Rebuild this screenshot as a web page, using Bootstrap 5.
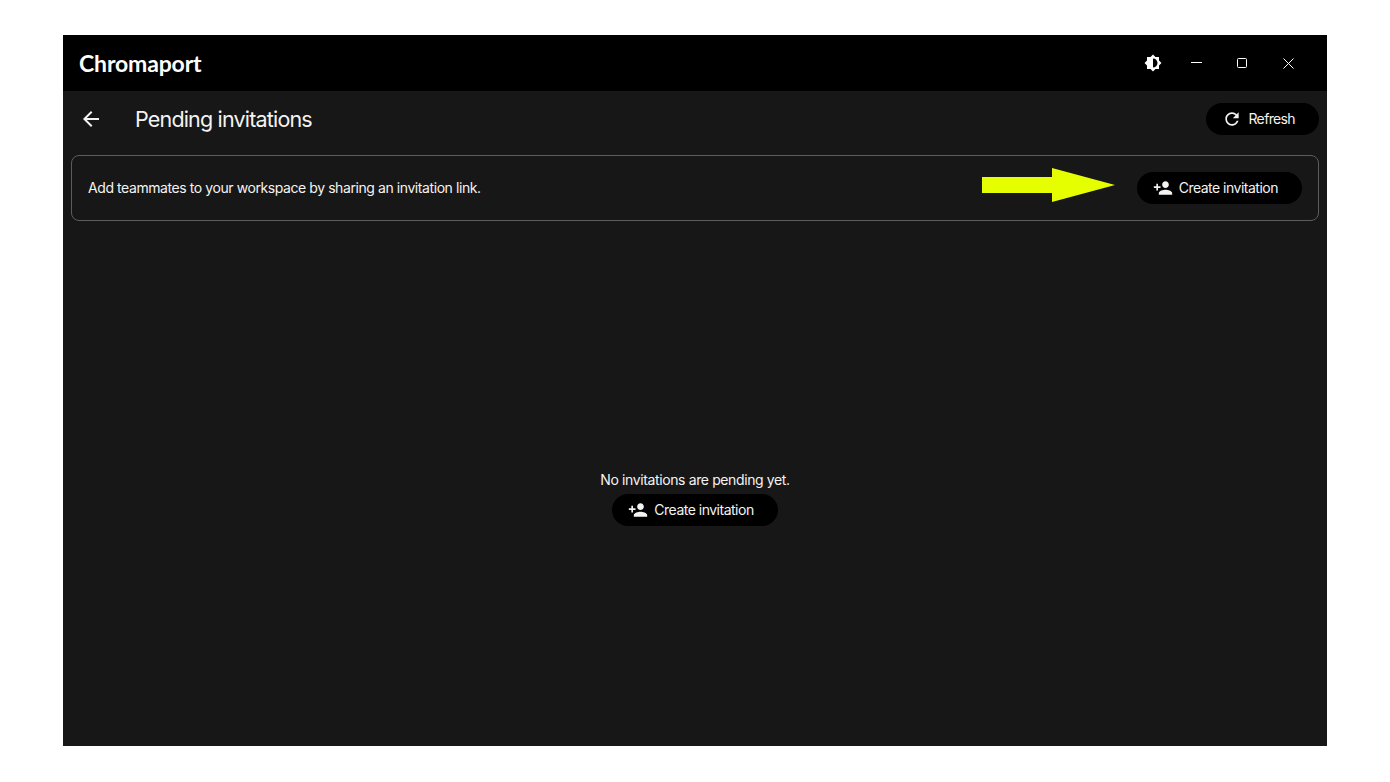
<!doctype html>
<html lang="en">
<head>
<meta charset="utf-8">
<title>Chromaport</title>
<link href="https://cdn.jsdelivr.net/npm/bootstrap@5.3.0/dist/css/bootstrap.min.css" rel="stylesheet">
<style>
html,body{height:100%;}
body{background:#fff;font-family:Inter,"Liberation Sans",sans-serif;padding:35px 63px 36px;overflow:hidden;}
.app-win{width:1264px;height:711px;background:#171717;color:#f5f3f1;}
.title-bar{height:56px;background:#000;padding-left:16px;padding-right:16px;}
.brand-name{font-family:Lato,"Noto Sans",sans-serif;font-size:23px;font-weight:700;color:#fff;letter-spacing:-.15px;line-height:1;}
.win-ctrl{width:46px;height:56px;color:#fff;}
.theme-ctrl{margin-right:-3px;margin-left:-1px;}
.page-head{height:56px;margin-bottom:8px;padding-left:8px;padding-right:8px;}
.back-btn{width:40px;height:40px;color:#f5f3f1;margin-right:24px;}
.page-title{font-size:21.5px;font-weight:400;letter-spacing:-.82px;margin:2px 0 0;line-height:1;}
.pill-btn{height:32px;background:#000;color:#f5f3f1;border:0;border-radius:16px;font-size:14px;letter-spacing:-.5px;padding:0 24px 0 16px;gap:6px;white-space:nowrap;}
.pill-btn:hover,.pill-btn:focus{background:#000;color:#f5f3f1;}
.pill-label{margin-bottom:2px;}
.refresh-pill{letter-spacing:-.64px;}
.invite-panel{height:66px;margin:0 8px;border:1px solid #5c5c5c;border-radius:8px;padding:0 16px;font-size:14px;letter-spacing:-.42px;}
.pointer-arrow{margin-right:22px;margin-top:-6px;}
.empty-zone{height:570px;}
.empty-text{font-size:14px;letter-spacing:-.38px;line-height:20px;margin:0 0 4px;}
.empty-inner{margin-top:29px;}
</style>
</head>
<body>
<div class="app-win d-flex flex-column">
  <header class="title-bar d-flex align-items-center flex-shrink-0">
    <span class="brand-name">Chromaport</span>
    <div class="ms-auto d-flex align-items-center">
      <span class="win-ctrl theme-ctrl d-flex align-items-center justify-content-center">
        <svg width="18" height="18" viewBox="0 0 24 24" fill="currentColor"><path d="M20 8.690V4h-4.690L12 .69 8.690 4H4v4.690L.69 12 4 15.310V20h4.690L12 23.310 15.310 20H20v-4.690L23.310 12 20 8.690zM12 18V6c3.310 0 6 2.690 6 6s-2.690 6-6 6z"/></svg>
      </span>
      <span class="win-ctrl d-flex align-items-center justify-content-center">
        <svg width="11" height="11" viewBox="0 0 11 11" fill="none" stroke="currentColor"><path d="M0 4.500h11"/></svg>
      </span>
      <span class="win-ctrl d-flex align-items-center justify-content-center">
        <svg width="10" height="10" viewBox="0 0 10 10" fill="none" stroke="currentColor"><rect x=".5" y=".5" width="9" height="9" rx="1"/></svg>
      </span>
      <span class="win-ctrl d-flex align-items-center justify-content-center">
        <svg width="11" height="11" viewBox="0 0 11 11" fill="none" stroke="currentColor"><path d="M.5.5l10 10M10.500.5l-10 10"/></svg>
      </span>
    </div>
  </header>

  <div class="page-head d-flex align-items-center flex-shrink-0">
    <span class="back-btn d-flex align-items-center justify-content-center">
      <svg width="24" height="24" viewBox="0 0 24 24" fill="currentColor"><path d="M20 11H7.830l5.590-5.590L12 4l-8 8 8 8 1.410-1.410L7.830 13H20v-2z"/></svg>
    </span>
    <h1 class="page-title">Pending invitations</h1>
    <button type="button" class="btn pill-btn refresh-pill ms-auto d-flex align-items-center">
      <svg width="20" height="20" viewBox="0 0 24 24" fill="currentColor"><path d="M17.650 6.350C16.200 4.900 14.210 4 12 4c-4.420 0-7.990 3.580-7.990 8s3.570 8 7.990 8c3.730 0 6.840-2.550 7.730-6h-2.080c-.82 2.330-3.040 4-5.650 4-3.310 0-6-2.690-6-6s2.690-6 6-6c1.660 0 3.140.69 4.220 1.780L13 11h7V4l-2.350 2.350z"/></svg>
      <span class="pill-label">Refresh</span>
    </button>
  </div>

  <section class="invite-panel d-flex align-items-center flex-shrink-0">
    <span class="pill-label">Add teammates to your workspace by sharing an invitation link.</span>
    <svg class="pointer-arrow ms-auto" width="133" height="34" viewBox="0 0 133 34"><path fill="#e5ff00" d="M0 9h70V0l63 17L70 34V25H0z"/></svg>
    <button type="button" class="btn pill-btn d-flex align-items-center">
      <svg width="20" height="20" viewBox="0 0 24 24" fill="currentColor"><path d="M15 12c2.210 0 4-1.790 4-4s-1.790-4-4-4-4 1.790-4 4 1.790 4 4 4zm-9-2V7H4v3H1v2h3v3h2v-3h3v-2H6zm9 4c-2.670 0-8 1.340-8 4v2h16v-2c0-2.660-5.330-4-8-4z"/></svg>
      <span class="pill-label">Create invitation</span>
    </button>
  </section>

  <main class="empty-zone d-flex flex-column align-items-center justify-content-center flex-grow-1">
    <div class="empty-inner d-flex flex-column align-items-center">
      <p class="empty-text">No invitations are pending yet.</p>
      <button type="button" class="btn pill-btn d-flex align-items-center">
        <svg width="20" height="20" viewBox="0 0 24 24" fill="currentColor"><path d="M15 12c2.210 0 4-1.790 4-4s-1.790-4-4-4-4 1.790-4 4 1.790 4 4 4zm-9-2V7H4v3H1v2h3v3h2v-3h3v-2H6zm9 4c-2.670 0-8 1.340-8 4v2h16v-2c0-2.660-5.330-4-8-4z"/></svg>
        <span class="pill-label">Create invitation</span>
      </button>
    </div>
  </main>
</div>
<script src="https://cdn.jsdelivr.net/npm/bootstrap@5.3.0/dist/js/bootstrap.bundle.min.js"></script>
</body>
</html>
